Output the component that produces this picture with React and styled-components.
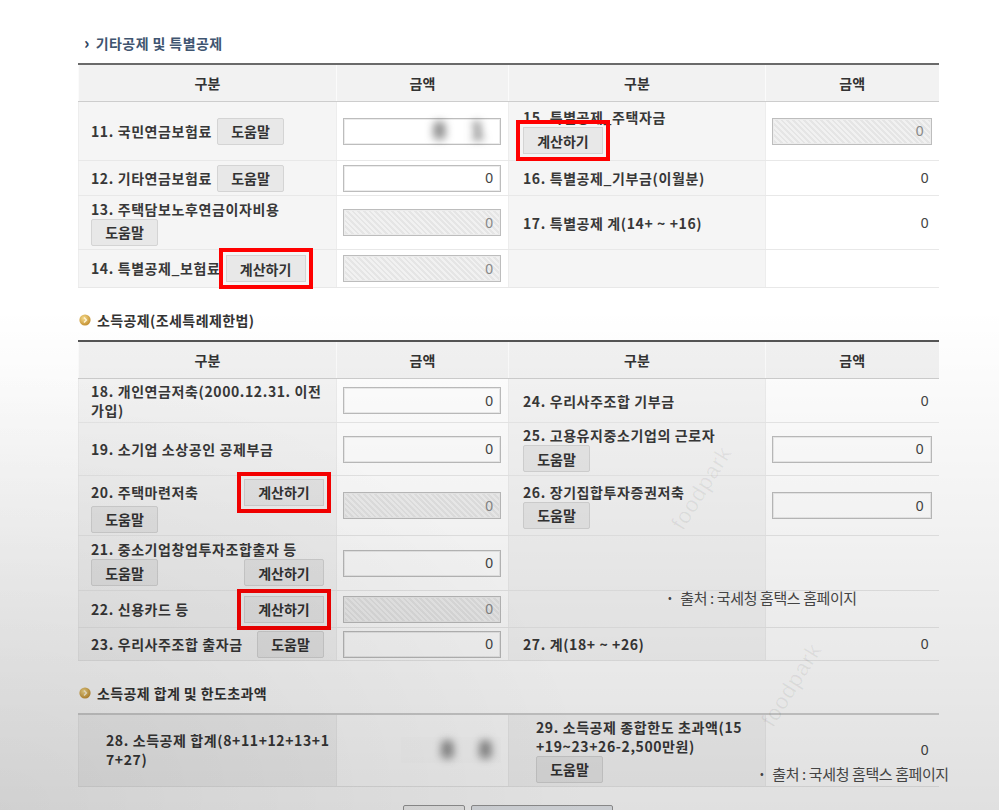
import React from 'react';
import styled, { createGlobalStyle } from 'styled-components';

const Global = createGlobalStyle`
  html, body {
    margin: 0;
    padding: 0;
    background: #fff;
    overflow: hidden;
  }
`;

const Page = styled.div`
  position: relative;
  width: 999px;
  height: 810px;
  overflow: hidden;
  box-sizing: border-box;
  padding: 33px 0 0 78px;
  background: #fff;
  font-family: "Noto Sans CJK KR", "Noto Sans", sans-serif;
  color: #363636;
`;

const Section = styled.section`
  margin-bottom: 22px;
`;

const Heading = styled.h3`
  display: flex;
  align-items: center;
  gap: ${p => p.$gap}px;
  height: 20px;
  margin: 0 0 10px;
  padding-left: ${p => p.$indent}px;
  font-size: 14px;
  font-weight: 700;
  letter-spacing: 0.4px;
  color: ${p => p.$tone};
`;

const Chevron = styled.span`
  font-size: 16px;
  font-weight: 900;
  line-height: 1;
  margin-top: -3px;
  color: #2f4360;
`;

const Table = styled.table`
  width: 860px;
  border-collapse: collapse;
  table-layout: fixed;
  border-top: 2px solid ${p => p.$line};
`;

const Th = styled.th`
  height: 36px;
  background: #f2f2f2;
  border-bottom: 1px solid #cdcdcd;
  border-left: 1px solid #fbfbfb;
  font-size: 14px;
  font-weight: 700;
  color: #333;
  text-align: center;
  padding: 0;
`;

const Row = styled.tr`
  height: ${p => p.$h}px;
`;

const LabelTd = styled.td`
  background: #f5f5f5;
  border-bottom: 1px solid #e8e8e8;
  border-left: 1px solid #ededed;
  padding: 0 12px 0 ${p => p.$pad || 12}px;
  vertical-align: middle;
  font-size: 14px;
  font-weight: 700;
  letter-spacing: 0.6px;
  line-height: 20px;
  color: #383838;
  white-space: nowrap;
`;

const AmountTd = styled.td`
  background: #fff;
  border-bottom: 1px solid #e8e8e8;
  border-left: 1px solid #ededed;
  padding: 0 7px 0 6px;
  vertical-align: middle;
  text-align: right;
`;

const Line = styled.div`
  display: flex;
  align-items: center;
  justify-content: ${p => (p.$between ? 'space-between' : 'flex-start')};
  gap: 5px;
  min-height: 18px;
  line-height: 19px;
`;

const Btn = styled.button`
  width: ${p => p.$w}px;
  height: 27px;
  padding: 0;
  border: 1px solid #d4d4d4;
  border-radius: ${p => (p.$mark ? 0 : 2)}px;
  background: #e8e8e8;
  font-family: "Noto Sans CJK KR", sans-serif;
  font-size: 14px;
  font-weight: 700;
  color: #333;
  flex-shrink: 0;
  outline: ${p => (p.$mark ? '4px solid #f00' : 'none')};
  outline-offset: 3px;
`;

const Field = styled.div`
  display: flex;
  align-items: center;
  justify-content: flex-end;
  height: 27px;
  box-sizing: border-box;
  padding-right: 7px;
  border: 1px solid #bdbdbd;
  box-shadow: inset 0 0 0 1px #ececec;
  background: ${p =>
    p.$locked
      ? 'repeating-linear-gradient(45deg, #f1f1f1 0 2px, #e5e5e5 2px 4px)'
      : '#fff'};
  font-family: "Liberation Sans", sans-serif;
  font-size: 14px;
  color: ${p => (p.$locked ? '#888' : '#444')};
`;

const Plain = styled.span`
  display: block;
  padding-right: 3px;
  font-family: "Liberation Sans", sans-serif;
  font-size: 14px;
  color: #444;
`;

const BlurBox = styled.div`
  display: inline-flex;
  justify-content: flex-end;
  align-items: center;
  width: ${p => p.$w}px;
  height: 26px;
  background: #fdfdfd;
`;

const Blur = styled.span`
  font-family: "Liberation Sans", sans-serif;
  font-size: 24px;
  font-weight: 700;
  letter-spacing: 9px;
  color: #444;
  filter: blur(4px);
`;

const Caption = styled.div`
  position: absolute;
  left: ${p => p.$x}px;
  top: ${p => p.$y}px;
  z-index: 3;
  font-family: "Noto Sans CJK KR", sans-serif;
  font-size: 15px;
  letter-spacing: -0.4px;
  color: #444;
  white-space: nowrap;

  &::before {
    content: '•';
    margin-right: 9px;
    font-size: 11px;
    vertical-align: 2px;
  }
`;

const Mark = styled.div`
  position: absolute;
  left: ${p => p.$x}px;
  top: ${p => p.$y}px;
  z-index: 2;
  transform: rotate(-58deg);
  font-family: "Liberation Sans", sans-serif;
  font-size: 22px;
  letter-spacing: 1px;
  color: rgba(0, 0, 0, 0.06);
  pointer-events: none;
`;

const Vignette = styled.div`
  position: absolute;
  inset: 0;
  z-index: 1;
  pointer-events: none;
  background:
    radial-gradient(ellipse 60% 55% at 0% 100%, rgba(0, 0, 0, 0.07), rgba(0, 0, 0, 0)),
    linear-gradient(to bottom, rgba(0, 0, 0, 0) 38%, rgba(0, 0, 0, 0.12) 100%);
`;

const ButtonBar = styled.div`
  display: flex;
  justify-content: center;
  gap: 6px;
  width: 860px;
  margin-top: 18px;
`;

const BarBtn = styled.div`
  width: ${p => p.$w}px;
  height: 30px;
  border: 1px solid #9a9a9a;
  border-radius: 2px;
  background: ${p => p.$bg};
`;

function GoldDot() {
  return (
    <svg width="12" height="12" viewBox="0 0 12 12">
      <defs>
        <radialGradient id="gd" cx="40%" cy="35%" r="70%">
          <stop offset="0%" stopColor="#f7dc8c" />
          <stop offset="100%" stopColor="#c08a2a" />
        </radialGradient>
      </defs>
      <circle cx="6" cy="6" r="5.6" fill="url(#gd)" />
      <path d="M5 3.6 L7.4 6 L5 8.4" stroke="#fff4d6" strokeWidth="1.4" fill="none" />
    </svg>
  );
}

function Cols() {
  return (
    <colgroup>
      <col style={{ width: 258 }} />
      <col style={{ width: 172 }} />
      <col style={{ width: 257 }} />
      <col style={{ width: 173 }} />
    </colgroup>
  );
}

function Head() {
  return (
    <thead>
      <tr>
        <Th>구분</Th>
        <Th>금액</Th>
        <Th>구분</Th>
        <Th>금액</Th>
      </tr>
    </thead>
  );
}

const Help = () => <Btn $w={67}>도움말</Btn>;
const Calc = ({ mark }) => <Btn $w={80} $mark={mark}>계산하기</Btn>;

export default function App() {
  return (
    <Page>
      <Global />

      <Section>
        <Heading $tone="#3f5570" $indent={6} $gap={6}>
          <Chevron>›</Chevron>기타공제 및 특별공제
        </Heading>
        <Table $line="#6a6a6a">
          <Cols />
          <Head />
          <tbody>
            <Row $h={59}>
              <LabelTd>
                <Line>11. 국민연금보험료<Help /></Line>
              </LabelTd>
              <AmountTd>
                <Field><Blur>8 1</Blur></Field>
              </AmountTd>
              <LabelTd $pad={14}>
                <Line>15. 특별공제_주택자금</Line>
                <Line><Calc mark /></Line>
              </LabelTd>
              <AmountTd>
                <Field $locked>0</Field>
              </AmountTd>
            </Row>
            <Row $h={35}>
              <LabelTd>
                <Line>12. 기타연금보험료<Help /></Line>
              </LabelTd>
              <AmountTd><Field>0</Field></AmountTd>
              <LabelTd $pad={14}>16. 특별공제_기부금(이월분)</LabelTd>
              <AmountTd><Plain>0</Plain></AmountTd>
            </Row>
            <Row $h={54}>
              <LabelTd>
                <Line>13. 주택담보노후연금이자비용</Line>
                <Line><Help /></Line>
              </LabelTd>
              <AmountTd><Field $locked>0</Field></AmountTd>
              <LabelTd $pad={14}>17. 특별공제 계(14+ ~ +16)</LabelTd>
              <AmountTd><Plain>0</Plain></AmountTd>
            </Row>
            <Row $h={38}>
              <LabelTd>
                <Line>14. 특별공제_보험료<Calc mark /></Line>
              </LabelTd>
              <AmountTd><Field $locked>0</Field></AmountTd>
              <LabelTd $pad={14} />
              <AmountTd />
            </Row>
          </tbody>
        </Table>
      </Section>

      <Section>
        <Heading $tone="#333" $indent={1} $gap={6}>
          <GoldDot />소득공제(조세특례제한법)
        </Heading>
        <Table $line="#555">
          <Cols />
          <Head />
          <tbody>
            <Row $h={44}>
              <LabelTd>
                <Line>18. 개인연금저축(2000.12.31. 이전</Line>
                <Line>가입)</Line>
              </LabelTd>
              <AmountTd><Field>0</Field></AmountTd>
              <LabelTd $pad={14}>24. 우리사주조합 기부금</LabelTd>
              <AmountTd><Plain>0</Plain></AmountTd>
            </Row>
            <Row $h={53}>
              <LabelTd>19. 소기업 소상공인 공제부금</LabelTd>
              <AmountTd><Field>0</Field></AmountTd>
              <LabelTd $pad={14}>
                <Line>25. 고용유지중소기업의 근로자</Line>
                <Line><Help /></Line>
              </LabelTd>
              <AmountTd><Field>0</Field></AmountTd>
            </Row>
            <Row $h={60}>
              <LabelTd>
                <Line $between>20. 주택마련저축<Calc mark /></Line>
                <Line><Help /></Line>
              </LabelTd>
              <AmountTd><Field $locked>0</Field></AmountTd>
              <LabelTd $pad={14}>
                <Line>26. 장기집합투자증권저축</Line>
                <Line><Help /></Line>
              </LabelTd>
              <AmountTd><Field>0</Field></AmountTd>
            </Row>
            <Row $h={55}>
              <LabelTd>
                <Line>21. 중소기업창업투자조합출자 등</Line>
                <Line $between><Help /><Calc /></Line>
              </LabelTd>
              <AmountTd><Field>0</Field></AmountTd>
              <LabelTd $pad={14} />
              <AmountTd />
            </Row>
            <Row $h={37}>
              <LabelTd>
                <Line $between>22. 신용카드 등<Calc mark /></Line>
              </LabelTd>
              <AmountTd><Field $locked>0</Field></AmountTd>
              <LabelTd $pad={14} />
              <AmountTd />
            </Row>
            <Row $h={33}>
              <LabelTd>
                <Line $between>23. 우리사주조합 출자금<Help /></Line>
              </LabelTd>
              <AmountTd><Field>0</Field></AmountTd>
              <LabelTd $pad={14}>27. 계(18+ ~ +26)</LabelTd>
              <AmountTd><Plain>0</Plain></AmountTd>
            </Row>
          </tbody>
        </Table>
      </Section>

      <Section>
        <Heading $tone="#333" $indent={1} $gap={6}>
          <GoldDot />소득공제 합계 및 한도초과액
        </Heading>
        <Table $line="#cfcfcf">
          <Cols />
          <tbody>
            <Row $h={72}>
              <LabelTd $pad={27}>
                <Line>28. 소득공제 합계(8+11+12+13+1</Line>
                <Line>7+27)</Line>
              </LabelTd>
              <AmountTd>
                <BlurBox $w={100}><Blur>8 8</Blur></BlurBox>
              </AmountTd>
              <LabelTd $pad={27}>
                <Line>29. 소득공제 종합한도 초과액(15</Line>
                <Line>+19~23+26-2,500만원)</Line>
                <Line><Help /></Line>
              </LabelTd>
              <AmountTd><Plain>0</Plain></AmountTd>
            </Row>
          </tbody>
        </Table>
        <ButtonBar>
          <BarBtn $w={60} $bg="#f4f4f4" />
          <BarBtn $w={140} $bg="#e6e9ee" />
        </ButtonBar>
      </Section>

      <Vignette />
      <Mark $x={655} $y={475}>foodpark</Mark>
      <Mark $x={745} $y={672}>foodpark</Mark>
      <Caption $x={668} $y={587}>출처 : 국세청 홈택스 홈페이지</Caption>
      <Caption $x={760} $y={763}>출처 : 국세청 홈택스 홈페이지</Caption>
    </Page>
  );
}
